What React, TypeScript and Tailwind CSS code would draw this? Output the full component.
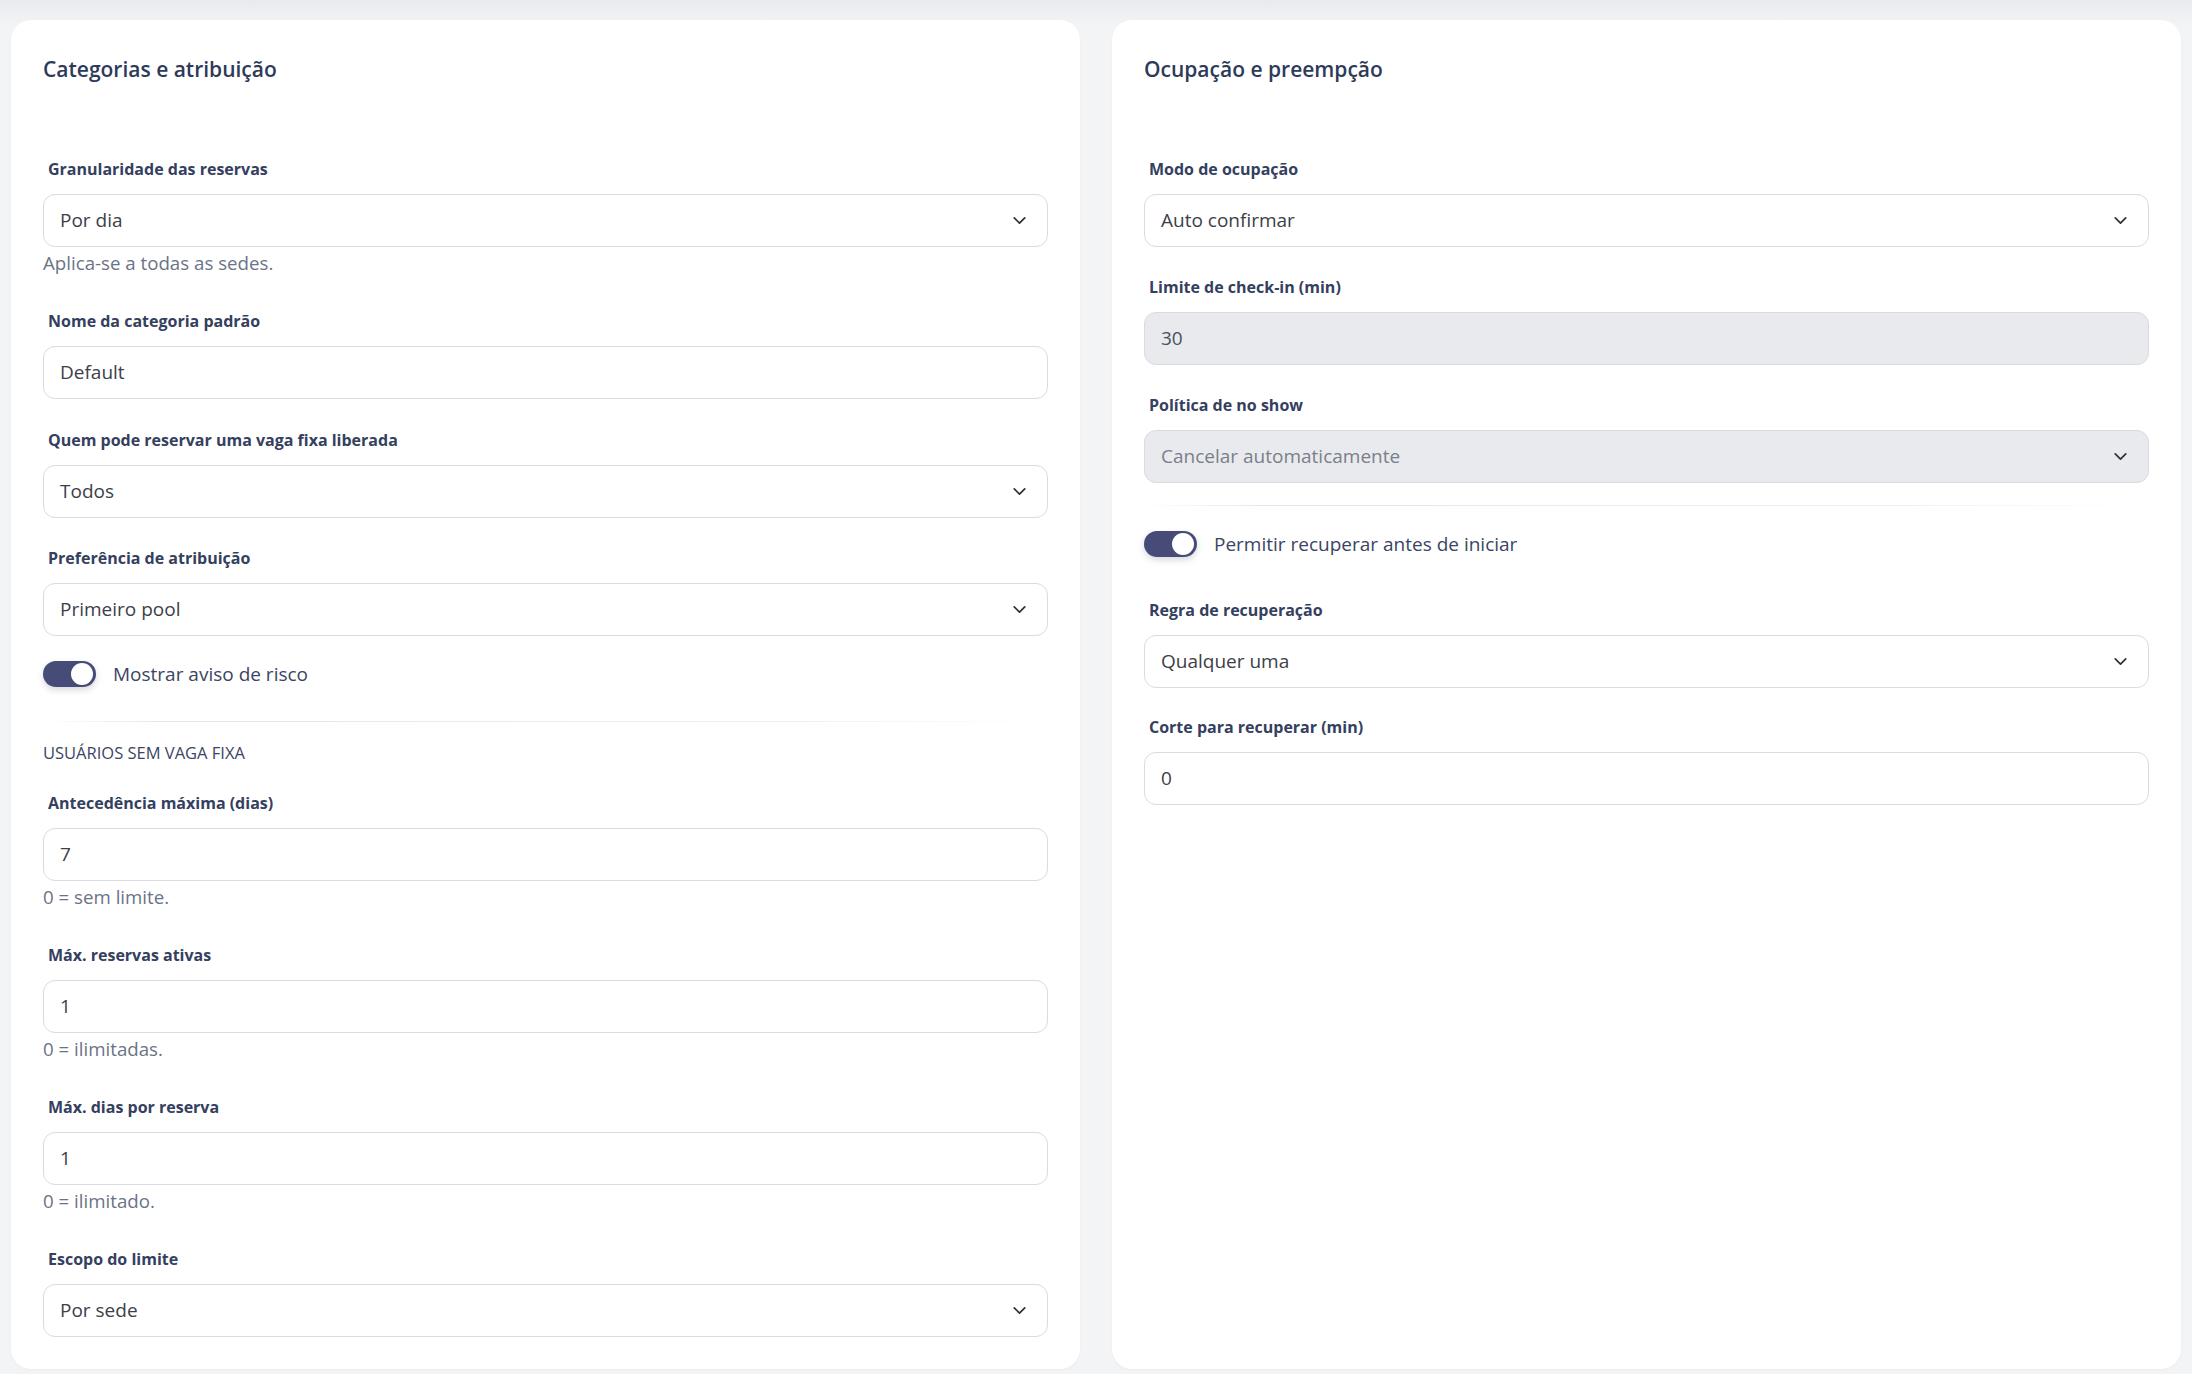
import React from "react";
import { ChevronDown } from "lucide-react";

const FONT = { fontFamily: '"Open Sans", "Noto Sans", Arial, sans-serif' };

function Label({ children }: { children: React.ReactNode }) {
  return (
    <div className="pl-[5px] text-[16px] font-bold leading-[20px] text-[#34405e]">
      {children}
    </div>
  );
}

function Help({ children }: { children: React.ReactNode }) {
  return <div className="mt-[4px] text-[18.7px] leading-[24px] text-[#6b7386]">{children}</div>;
}

function TextInput({ value, disabled }: { value: string; disabled?: boolean }) {
  return (
    <div
      className={
        "mt-[15px] flex h-[53px] items-center rounded-[12px] border px-[16px] text-[19px] " +
        (disabled
          ? "border-[#d9dbe0] bg-[#e9eaed] text-[#4b5060]"
          : "border-[#d9dbe0] bg-white text-[#3c4048]")
      }
    >
      {value}
    </div>
  );
}

function Select({ value, disabled }: { value: string; disabled?: boolean }) {
  return (
    <div
      className={
        "mt-[15px] flex h-[53px] items-center justify-between rounded-[12px] border pl-[16px] pr-[17px] text-[19px] " +
        (disabled
          ? "border-[#d9dbe0] bg-[#e9eaed] text-[#7a7f8c]"
          : "border-[#d9dbe0] bg-white text-[#3c4048]")
      }
    >
      <span>{value}</span>
      <ChevronDown size={21} strokeWidth={2} className="text-[#2f3238]" />
    </div>
  );
}

function Toggle({ label }: { label: string }) {
  return (
    <div className="flex items-center gap-[17px]">
      <div className="relative h-[26px] w-[53px] rounded-full bg-[#464b78] shadow-[0_3px_6px_rgba(40,45,80,0.18)]">
        <div className="absolute right-[3px] top-[2px] h-[22px] w-[22px] rounded-full bg-white" />
      </div>
      <span className="text-[19px] leading-[26px] text-[#3b4563]">{label}</span>
    </div>
  );
}

function Divider() {
  return (
    <div className="h-px w-full bg-[linear-gradient(to_right,rgba(226,228,232,0)_0%,#e4e6ea_12%,#eceef1_70%,rgba(236,238,241,0)_100%)]" />
  );
}

function Card({ title, children }: { title: string; children: React.ReactNode }) {
  return (
    <div className="flex-1 rounded-[20px] bg-white px-[32px] pt-[35px] shadow-[0_1px_3px_rgba(20,30,50,0.04)]">
      <h2 className="text-[21px] font-semibold leading-[28px] text-[#2e3a59]">{title}</h2>
      <div className="mt-[76px]">{children}</div>
    </div>
  );
}

export default function App() {
  return (
    <div
      style={FONT}
      className="flex h-[1374px] w-full gap-[32px] bg-[linear-gradient(to_bottom,#e8eaed_0px,#f3f4f6_26px)] px-[11px] pb-[5px] pt-[20px]"
    >
      <Card title="Categorias e atribuição">
        <Label>Granularidade das reservas</Label>
        <Select value="Por dia" />
        <Help>Aplica-se a todas as sedes.</Help>

        <div className="mt-[36px]">
          <Label>Nome da categoria padrão</Label>
          <TextInput value="Default" />
        </div>

        <div className="mt-[31px]">
          <Label>Quem pode reservar uma vaga fixa liberada</Label>
          <Select value="Todos" />
        </div>

        <div className="mt-[30px]">
          <Label>Preferência de atribuição</Label>
          <Select value="Primeiro pool" />
        </div>

        <div className="mt-[25px]">
          <Toggle label="Mostrar aviso de risco" />
        </div>

        <div className="mt-[34px]">
          <Divider />
        </div>

        <div className="mt-[19px] text-[16.5px] leading-[24px] text-[#3b4563]">USUÁRIOS SEM VAGA FIXA</div>

        <div className="mt-[28px]">
          <Label>Antecedência máxima (dias)</Label>
          <TextInput value="7" />
          <Help>0 = sem limite.</Help>
        </div>

        <div className="mt-[36px]">
          <Label>Máx. reservas ativas</Label>
          <TextInput value="1" />
          <Help>0 = ilimitadas.</Help>
        </div>

        <div className="mt-[36px]">
          <Label>Máx. dias por reserva</Label>
          <TextInput value="1" />
          <Help>0 = ilimitado.</Help>
        </div>

        <div className="mt-[36px]">
          <Label>Escopo do limite</Label>
          <Select value="Por sede" />
        </div>
      </Card>

      <Card title="Ocupação e preempção">
        <Label>Modo de ocupação</Label>
        <Select value="Auto confirmar" />

        <div className="mt-[30px]">
          <Label>Limite de check-in (min)</Label>
          <TextInput value="30" disabled />
        </div>

        <div className="mt-[30px]">
          <Label>Política de no show</Label>
          <Select value="Cancelar automaticamente" disabled />
        </div>

        <div className="mt-[22px]">
          <Divider />
        </div>

        <div className="mt-[25px]">
          <Toggle label="Permitir recuperar antes de iniciar" />
        </div>

        <div className="mt-[43px]">
          <Label>Regra de recuperação</Label>
          <Select value="Qualquer uma" />
        </div>

        <div className="mt-[29px]">
          <Label>Corte para recuperar (min)</Label>
          <TextInput value="0" />
        </div>
      </Card>
    </div>
  );
}
